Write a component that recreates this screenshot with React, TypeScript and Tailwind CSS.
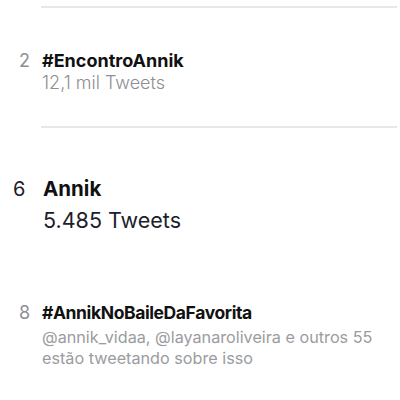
import React from 'react';

const Divider: React.FC = () => <div className="ml-[41px] mr-[3px] h-[2px] bg-[#e6e7e9]" />;

const App: React.FC = () => (
  <div className="w-[400px] h-[400px] bg-white overflow-hidden" style={{ fontFamily: 'Inter, "Liberation Sans", sans-serif' }}>
    <div className="h-[6px]" />
    <Divider />

    <div className="flex pt-[42px] pb-[33px]">
      <div className="w-[42px] pl-[19px] text-[18px] leading-[22px] text-[#8e8e93]">2</div>
      <div>
        <div className="text-[18px] leading-[22px] font-bold text-[#111]">#EncontroAnnik</div>
        <div className="text-[18px] leading-[21px] font-light text-[#8e8e93]">12,1 mil Tweets</div>
      </div>
    </div>

    <Divider />

    <div className="flex pt-[48px] pb-[69px]">
      <div className="w-[43px] pl-[13px] text-[20px] leading-[26px] text-[#1d1d2b]">6</div>
      <div>
        <div className="text-[20.5px] leading-[26px] font-bold text-[#111]">Annik</div>
        <div className="mt-[5px] text-[21.5px] leading-[26px] text-[#1d1d2b]">5.485 Tweets</div>
      </div>
    </div>

    <div className="flex">
      <div className="w-[42px] pl-[19px] text-[18px] leading-[22px] text-[#8e8e93]">8</div>
      <div>
        <div className="text-[17.5px] leading-[22px] font-bold tracking-[-0.4px] text-[#111]">#AnnikNoBaileDaFavorita</div>
        <div className="mt-[3px] text-[16.2px] leading-[21px] text-[#9a9ca0]">
          @annik_vidaa, @layanaroliveira e outros 55
          <br />
          estão tweetando sobre isso
        </div>
      </div>
    </div>
  </div>
);

export default App;
